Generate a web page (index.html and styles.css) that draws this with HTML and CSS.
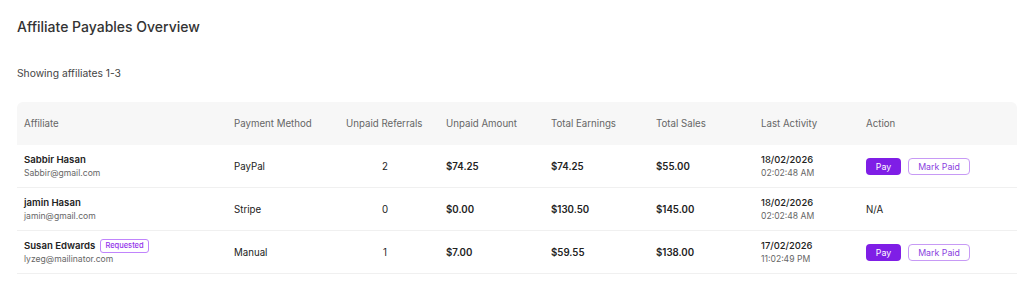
FILE: index.html
```html
<!DOCTYPE html>
<html lang="en">

<head>
    <meta charset="UTF-8">
    <meta name="viewport" content="width=device-width, initial-scale=1.0">
    <title>Affiliate Payables Overview</title>
    <link rel="stylesheet" href="styles.css">
</head>

<body>
    <div class="page">
        <h1 class="page-title">Affiliate Payables Overview</h1>
        <p class="showing">Showing affiliates 1-3</p>

        <table class="payables">
            <thead>
                <tr>
                    <th class="col-affiliate">Affiliate</th>
                    <th class="col-method">Payment Method</th>
                    <th class="col-refs">Unpaid Referrals</th>
                    <th class="col-money">Unpaid Amount</th>
                    <th class="col-money">Total Earnings</th>
                    <th class="col-money">Total Sales</th>
                    <th class="col-money">Last Activity</th>
                    <th class="col-action">Action</th>
                </tr>
            </thead>
            <tbody>
                <tr>
                    <td>
                        <div class="name">Sabbir Hasan</div>
                        <div class="email">Sabbir@gmail.com</div>
                    </td>
                    <td>PayPal</td>
                    <td class="refs">2</td>
                    <td class="amount">$74.25</td>
                    <td class="amount">$74.25</td>
                    <td class="amount">$55.00</td>
                    <td>
                        <div class="date">18/02/2026</div>
                        <div class="time">02:02:48 AM</div>
                    </td>
                    <td>
                        <div class="actions">
                            <button class="btn-pay">Pay</button>
                            <button class="btn-mark">Mark Paid</button>
                        </div>
                    </td>
                </tr>
                <tr>
                    <td>
                        <div class="name">jamin Hasan</div>
                        <div class="email">jamin@gmail.com</div>
                    </td>
                    <td>Stripe</td>
                    <td class="refs">0</td>
                    <td class="amount">$0.00</td>
                    <td class="amount">$130.50</td>
                    <td class="amount">$145.00</td>
                    <td>
                        <div class="date">18/02/2026</div>
                        <div class="time">02:02:48 AM</div>
                    </td>
                    <td>N/A</td>
                </tr>
                <tr>
                    <td>
                        <div class="name">Susan Edwards <span class="badge">Requested</span></div>
                        <div class="email">lyzeg@mailinator.com</div>
                    </td>
                    <td>Manual</td>
                    <td class="refs">1</td>
                    <td class="amount">$7.00</td>
                    <td class="amount">$59.55</td>
                    <td class="amount">$138.00</td>
                    <td>
                        <div class="date">17/02/2026</div>
                        <div class="time">11:02:49 PM</div>
                    </td>
                    <td>
                        <div class="actions">
                            <button class="btn-pay">Pay</button>
                            <button class="btn-mark">Mark Paid</button>
                        </div>
                    </td>
                </tr>
            </tbody>
        </table>
    </div>
</body>

</html>
```

FILE: styles.css
```css
* {
    margin: 0;
    padding: 0;
    box-sizing: border-box;
}

body {
    font-family: 'Inter', 'Noto Sans', sans-serif;
    background-color: #fff;
    color: #222;
}

.page {
    padding: 16px 7px 0 17px;
}

.page-title {
    font-size: 14px;
    font-weight: 500;
    color: #333;
    line-height: 22px;
}

.showing {
    font-size: 10.3px;
    color: #444;
    margin-top: 28px;
    line-height: 14px;
}

.payables {
    width: 1000px;
    margin-top: 22px;
    border-collapse: separate;
    border-spacing: 0;
    table-layout: fixed;
    font-size: 9.7px;
}

.payables th {
    background-color: #f7f7f7;
    color: #666;
    font-weight: 400;
    text-align: left;
    height: 43px;
    padding: 0 7px;
}

.payables th:first-child {
    border-top-left-radius: 6px;
}

.payables th:last-child {
    border-top-right-radius: 6px;
}

.col-affiliate { width: 210px; }
.col-method { width: 112px; }
.col-refs { width: 100px; }
.col-money { width: 105px; }
.col-action { width: 158px; }

.payables td {
    height: 43px;
    padding: 0 7px;
    border-bottom: 1px solid #f0f0f0;
    vertical-align: middle;
    color: #222;
}

.payables .refs {
    text-align: center;
    padding-right: 15px;
}

.amount {
    font-weight: 600;
}

.name {
    font-weight: 600;
    font-size: 9.6px;
    line-height: 14px;
    display: flex;
    align-items: center;
    gap: 5px;
}

.email,
.time {
    font-size: 8.6px;
    color: #666;
    line-height: 13px;
}

.date {
    font-weight: 500;
    font-size: 9.4px;
    line-height: 14px;
}

.badge {
    font-size: 7.5px;
    font-weight: 500;
    color: #9333ea;
    border: 1px solid #c084fc;
    border-radius: 3px;
    padding: 1px 4px;
    line-height: 10px;
}

.actions {
    display: flex;
    gap: 7px;
    align-items: center;
}

.btn-pay,
.btn-mark {
    font-family: 'Inter', 'Noto Sans', sans-serif;
    font-size: 8.8px;
    height: 17px;
    border-radius: 4px;
    cursor: pointer;
}

.btn-pay {
    width: 35px;
    background-color: #7f1ee6;
    color: #fff;
    border: none;
}

.btn-mark {
    width: 62px;
    background: #fff;
    color: #8b3fe0;
    border: 1px solid #c79af5;
}
```
